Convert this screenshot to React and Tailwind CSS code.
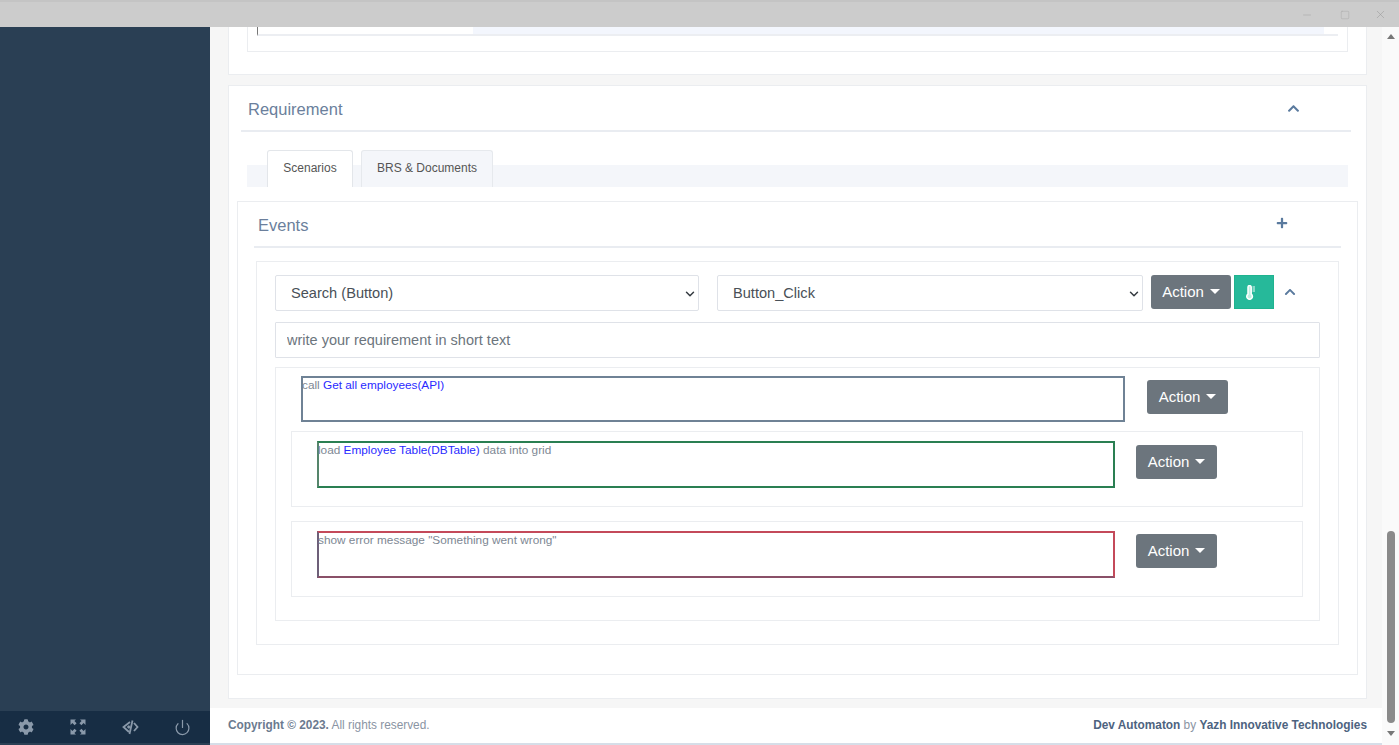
import { FaCog, FaChevronUp, FaPlus } from "react-icons/fa";
import { Power, ChevronDown, Minus, Square, X } from "lucide-react";

function ActionButton({ width = "w-[81px]" }) {
  return (
    <button className={`flex h-[34px] shrink-0 items-center justify-center gap-[6px] rounded-[3px] bg-[#6c757d] text-[15px] text-white ${width}`}>
      Action
      <span className="mt-[-2px] h-0 w-0 border-x-[5px] border-t-[5px] border-x-transparent border-t-white" />
    </button>
  );
}

function PickList({ value, className }) {
  return (
    <div className={`relative h-[36px] ${className}`}>
      <select
        defaultValue={value}
        className="h-full w-full appearance-none rounded-[2px] border border-[#dfe2e8] bg-white pl-[15px] pt-[2px] text-[14.6px] text-[#495057]"
      >
        <option>{value}</option>
      </select>
      <ChevronDown size={14} strokeWidth={2.5} className="pointer-events-none absolute right-[2px] top-[12px] text-[#343a40]" />
    </div>
  );
}

function StepBox({ borderClass, height, children }) {
  return (
    <div className={`w-full border-2 bg-white indent-[-1px] text-[11.8px] leading-[15px] text-[#7d8793] ${borderClass} ${height}`}>
      {children}
    </div>
  );
}

function SectionHead({ title, icon, className }) {
  return (
    <div className={`flex items-center justify-between border-b-2 border-[#e9ecf1] ${className}`}>
      <span className="pt-[2px] text-[16.5px] text-[#6b7f9c]">{title}</span>
      {icon}
    </div>
  );
}

export default function App() {
  return (
    <div className="flex h-[745px] w-[1399px] flex-col overflow-hidden bg-white font-['Liberation_Sans',Arial,sans-serif]">
      {/* window title bar */}
      <div className="flex h-[27px] shrink-0 items-center justify-end border-t-2 border-[#c4c4c4] bg-[#cccccc] text-[#a9a9a9]">
        <Minus size={12} strokeWidth={1.2} className="mr-[27px]" />
        <Square size={10} strokeWidth={1.2} className="mr-[24px]" />
        <X size={13} strokeWidth={1} className="mr-[12px] text-[#999]" />
      </div>

      <div className="flex min-h-0 flex-1">
        {/* sidebar */}
        <div className="flex w-[210px] shrink-0 flex-col bg-[#2a3f54]">
          <div className="flex-1" />
          <div className="mb-[2px] flex h-[32px] items-center justify-between bg-[#172d44] pl-[18px] pr-[19px] text-[#8a99aa]">
            <FaCog size={16} />
            <svg width="16" height="16" viewBox="0 0 16 16" fill="currentColor" className="ml-[6px]">
              <path d="M0.5 0.5H6L4.4 2.1 6.6 4.3 4.6 6.3 2.4 4.1 0.5 6z" />
              <path d="M15.5 0.5H10L11.6 2.1 9.4 4.3 11.4 6.3 13.6 4.1 15.5 6z" />
              <path d="M0.5 15.5H6L4.4 13.9 6.6 11.7 4.6 9.7 2.4 11.9 0.5 10z" />
              <path d="M15.5 15.5H10L11.6 13.9 9.4 11.7 11.4 9.7 13.6 11.9 15.5 10z" />
            </svg>
            <svg width="17" height="16" viewBox="0 0 17 16" fill="none" stroke="currentColor" strokeWidth="1.8" className="ml-[6px]">
              <path d="M8 3 1.5 8 7 13" />
              <path d="M12 4l3.5 4-3.5 4" />
              <path d="M10.5 1.5 7.5 15" />
              <circle cx="6.8" cy="8" r="1.2" fill="currentColor" strokeWidth="0.8" />
            </svg>
            <Power size={17} strokeWidth={1.7} className="ml-[5px]" />
          </div>
        </div>

        {/* main content */}
        <div className="flex min-w-0 flex-1 flex-col bg-[#f6f6f6]">
          <div className="min-h-0 flex-1 pl-[18px] pr-[15px]">
            {/* card cut off by scrolling */}
            <div className="h-[48px] border-x border-b border-[#ebedf0] bg-white px-[18px]">
              <div className="h-[25px] border-x border-b border-[#ebedf0] px-[9px]">
                <div className="flex h-[9px] border-b-2 border-[#eceef2] border-l border-l-[#777]">
                  <div className="w-[215px] bg-white" />
                  <div className="flex-1 bg-[#f3f6fd]" />
                  <div className="w-[14px] bg-white" />
                </div>
              </div>
            </div>

            {/* requirement card */}
            <div className="mt-[10px] h-[614px] border border-[#ebedf0] bg-white px-[8px] pt-[1px]">
              <SectionHead
                title="Requirement"
                className="ml-[4px] mr-[7px] h-[45px] pl-[7px] pr-[51px]"
                icon={<FaChevronUp size={13} className="text-[#5a7a9e]" />}
              />

              <div className="mx-[10px] mt-[18px] flex h-[37px] items-end gap-[8px] bg-[linear-gradient(to_bottom,#ffffff_15px,#f4f6fa_15px)] pl-[20px] text-[12px] text-[#555]">
                <div className="flex h-[37px] w-[86px] items-center justify-center rounded-t-[3px] border border-b-0 border-[#e3e6ea] bg-white pb-[3px]">Scenarios</div>
                <div className="flex h-[37px] w-[132px] items-center justify-center rounded-t-[3px] border border-b-0 border-[#e6e9ed] bg-[#f4f6fa] pb-[3px]">BRS &amp; Documents</div>
              </div>

              {/* events card */}
              <div className="mt-[14px] h-[474px] border border-[#ebedf0] px-[16px]">
                <SectionHead
                  title="Events"
                  className="h-[46px] pl-[4px] pr-[53px]"
                  icon={<FaPlus size={12} className="mb-[2px] text-[#5a7a9e]" />}
                />

                <div className="ml-[2px] mr-[2px] mt-[13px] h-[384px] border border-[#ebedf0] pl-[18px] pr-[17px] pt-[13px]">
                  <div className="flex items-start">
                    <PickList value="Search (Button)" className="w-[424px]" />
                    <PickList value="Button_Click" className="ml-[18px] w-[426px]" />
                    <div className="ml-[8px]"><ActionButton width="w-[80px]" /></div>
                    <button className="ml-[3px] flex h-[34px] w-[40px] items-center justify-center border border-[#1fb38f] bg-[#26b99a] pr-[6px] text-white">
                      <svg width="10" height="15" viewBox="0 0 10 15" fill="none" stroke="currentColor" strokeWidth="1.5">
                        <path d="M2 2.2a1.6 1.6 0 0 1 3.2 0v7a2.8 2.8 0 1 1-3.2 0z" fill="#bff0e2" />
                        <path d="M6.5 2h2.5M6.5 4h2.5M6.5 6h2.5" strokeWidth="0.9" />
                      </svg>
                    </button>
                    <FaChevronUp size={12} className="ml-[10px] mt-[11px] text-[#5a7a9e]" />
                  </div>

                  <input
                    readOnly
                    value="write your requirement in short text"
                    className="mt-[11px] h-[36px] w-[1045px] rounded-[1px] border border-[#dfe2e8] bg-white px-[11px] text-[14.5px] text-[#6c757d]"
                  />

                  <div className="mt-[9px] h-[254px] w-[1045px] border border-[#ebedf0] pt-[8px]">
                    <div className="flex items-start pl-[25px]">
                      <div className="w-[824px]">
                        <StepBox borderClass="border-[#6f8295]" height="h-[46px]">
                          call <span className="text-[#2a2aff]">Get all employees(API)</span>
                        </StepBox>
                      </div>
                      <div className="ml-[22px] mt-[4px]"><ActionButton /></div>
                    </div>

                    <div className="ml-[15px] mt-[9px] flex h-[76px] w-[1012px] items-start border border-[#ebedf0] pl-[25px] pt-[9px]">
                      <div className="w-[798px]">
                        <StepBox borderClass="border-[#2a7f52] border-l-[#55856b]" height="h-[47px]">
                          load <span className="text-[#2a2aff]">Employee Table(DBTable)</span> data into grid
                        </StepBox>
                      </div>
                      <div className="ml-[21px] mt-[4px]"><ActionButton /></div>
                    </div>

                    <div className="ml-[15px] mt-[14px] flex h-[76px] w-[1012px] items-start border border-[#ebedf0] pl-[25px] pt-[9px]">
                      <div className="w-[798px]">
                        <StepBox borderClass="border-[#c44a5a] border-l-[#6d5f78] border-b-[#8a5068]" height="h-[47px]">
                          show error message "Something went wrong"
                        </StepBox>
                      </div>
                      <div className="ml-[21px] mt-[3px]"><ActionButton /></div>
                    </div>
                  </div>
                </div>
              </div>
            </div>
          </div>

          {/* footer */}
          <div className="flex h-[35px] shrink-0 items-center justify-between bg-white pl-[18px] pr-[15px] text-[11.85px] text-[#8a94a3]">
            <span><b className="text-[#6b7a8f]">Copyright © 2023.</b> All rights reserved.</span>
            <span><b className="text-[#4d6380]">Dev Automaton</b> by <b className="text-[#4d6380]">Yazh Innovative Technologies</b></span>
          </div>
          <div className="h-[2px] shrink-0 bg-[#d6dee8]" />
        </div>

        {/* scrollbar */}
        <div className="flex w-[17px] shrink-0 flex-col items-center bg-[#fafafa]">
          <span className="mt-[7px] h-0 w-0 border-x-[4px] border-b-[5px] border-x-transparent border-b-[#777]" />
          <div className="flex-1" />
          <div className="mb-[8px] h-[192px] w-[8px] rounded-[4px] bg-[#8a8a8a]" />
          <span className="mb-[9px] h-0 w-0 border-x-[4px] border-t-[5px] border-x-transparent border-t-[#777]" />
        </div>
      </div>
    </div>
  );
}
